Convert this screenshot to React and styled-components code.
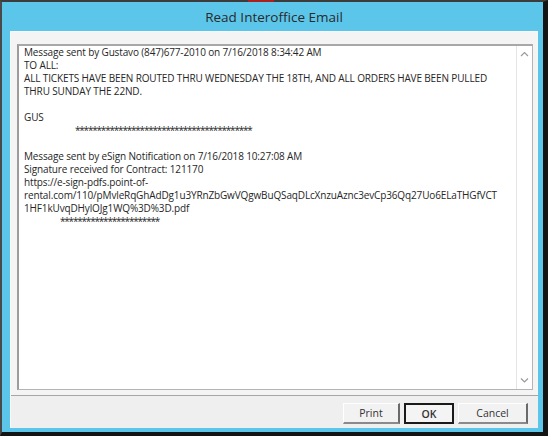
import styled, { createGlobalStyle } from 'styled-components';

const GlobalStyle = createGlobalStyle`
  html, body {
    margin: 0;
    padding: 0;
    background: #111;
  }
`;

const lines = [
  { text: 'Message sent by Gustavo (847)677-2010 on 7/16/2018 8:34:42 AM' },
  { text: 'TO ALL:' },
  { text: 'ALL TICKETS HAVE BEEN ROUTED THRU WEDNESDAY THE 18TH, AND ALL ORDERS HAVE BEEN PULLED' },
  { text: 'THRU SUNDAY THE 22ND.' },
  { text: '' },
  { text: 'GUS' },
  { text: '*****************************************', indent: 51, stars: true },
  { text: '' },
  { text: 'Message sent by eSign Notification on 7/16/2018 10:27:08 AM' },
  { text: 'Signature received for Contract: 121170' },
  { text: 'https://e-sign-pdfs.point-of-' },
  { text: 'rental.com/110/pMvleRqGhAdDg1u3YRnZbGwVQgwBuQSaqDLcXnzuAznc3evCp36Qq27Uo6ELaTHGfVCT' },
  { text: '1HF1kUvqDHylOJg1WQ%3D%3D.pdf' },
  { text: '***********************', indent: 36, stars: true },
];

export default function App() {
  return (
    <>
      <GlobalStyle />
      <Window>
        <RedMark />
        <TitleBar>Read Interoffice Email</TitleBar>
        <Client>
          <Panel>
            <TextBox>
              <Body>
                {lines.map((l, i) => (
                  <Line key={i} $indent={l.indent} $stars={l.stars}>
                    {l.text || '\u00a0'}
                  </Line>
                ))}
              </Body>
              <ScrollBar>
                <ScrollButton>
                  <Chevron d="M1 5 L4.5 1.5 L8 5" />
                </ScrollButton>
                <Track />
                <ScrollButton>
                  <Chevron d="M1 1.5 L4.5 5 L8 1.5" />
                </ScrollButton>
              </ScrollBar>
            </TextBox>
          </Panel>
          <Footer>
            <Button $w={57}>Print</Button>
            <Button $w={50} $default>
              OK
            </Button>
            <Button $w={70}>Cancel</Button>
          </Footer>
        </Client>
      </Window>
    </>
  );
}

const Chevron = ({ d }) => (
  <svg width="9" height="7" viewBox="0 0 9 7">
    <path d={d} fill="none" stroke="#9a9a9a" strokeWidth="1.2" />
  </svg>
);

const Window = styled.div`
  position: relative;
  width: 548px;
  height: 436px;
  box-sizing: border-box;
  border-left: 2px solid #4a4a4a;
  border-top: 2px solid #3c3c3c;
  border-right: 5px solid #141414;
  border-bottom: 4px solid #141414;
  background: #5cc6ea;
  padding: 0 5px 4px 8px;
  display: flex;
  flex-direction: column;
  font-family: 'Open Sans', 'Noto Sans', sans-serif;
`;

const RedMark = styled.div`
  position: absolute;
  top: -2px;
  left: 246px;
  width: 26px;
  height: 2px;
  background: #a82020;
`;

const TitleBar = styled.div`
  height: 29px;
  display: flex;
  align-items: center;
  justify-content: center;
  font-size: 13.5px;
  color: #2a2a2a;
`;

const Client = styled.div`
  flex: 1;
  min-width: 0;
  display: flex;
  flex-direction: column;
  background: #f0f0f0;
  border-top: 1px solid #fafafa;
  border-left: 1px solid #fafafa;
`;

const Panel = styled.div`
  flex: 1;
  display: flex;
  padding: 12px 5px 5px 6px;
  border-bottom: 1px solid #a6a6a6;
  background: #f4f4f4;
`;

const TextBox = styled.div`
  flex: 1;
  min-width: 0;
  display: flex;
  background: #fff;
  border: 1px solid #b4b4b4;
  border-left: 2px solid #9c9c9c;
  border-top: 2px solid #a8a8a8;
`;

const Body = styled.div`
  flex: 1;
  min-width: 0;
  padding: 0 0 0 5px;
  font-size: 10px;
  letter-spacing: -0.14px;
  line-height: 13px;
  color: #262626;
  white-space: pre;
  overflow: hidden;
`;

const Line = styled.div`
  padding-left: ${(p) => p.$indent || 0}px;
  height: 13px;
  letter-spacing: ${(p) => (p.$stars ? '-1.2px' : 'inherit')};
`;

const ScrollBar = styled.div`
  width: 15px;
  flex-shrink: 0;
  display: flex;
  flex-direction: column;
  border-left: 1px solid #e4e4e4;
  background: #fff;
`;

const ScrollButton = styled.div`
  height: 17px;
  display: flex;
  align-items: center;
  justify-content: center;
`;

const Track = styled.div`
  flex: 1;
`;

const Footer = styled.div`
  height: 32px;
  display: flex;
  justify-content: flex-end;
  align-items: flex-start;
  gap: 4px;
  padding: 7px 10px 0 0;
  box-sizing: border-box;
  background: #efefef;
`;

const Button = styled.div`
  width: ${(p) => p.$w}px;
  height: 21px;
  box-sizing: border-box;
  display: flex;
  align-items: center;
  justify-content: center;
  font-size: 10.5px;
  font-weight: ${(p) => (p.$default ? 600 : 400)};
  color: #333;
  background: #f2f2f2;
  border-top: 1px solid #fff;
  border-left: 1px solid #fff;
  border-right: 2px solid #6a6a6a;
  border-bottom: 2px solid #8a8a8a;
  ${(p) =>
    p.$default &&
    `
    border: 2px solid #1a1a1a;
    background: #f4f4f4;
  `}
`;
